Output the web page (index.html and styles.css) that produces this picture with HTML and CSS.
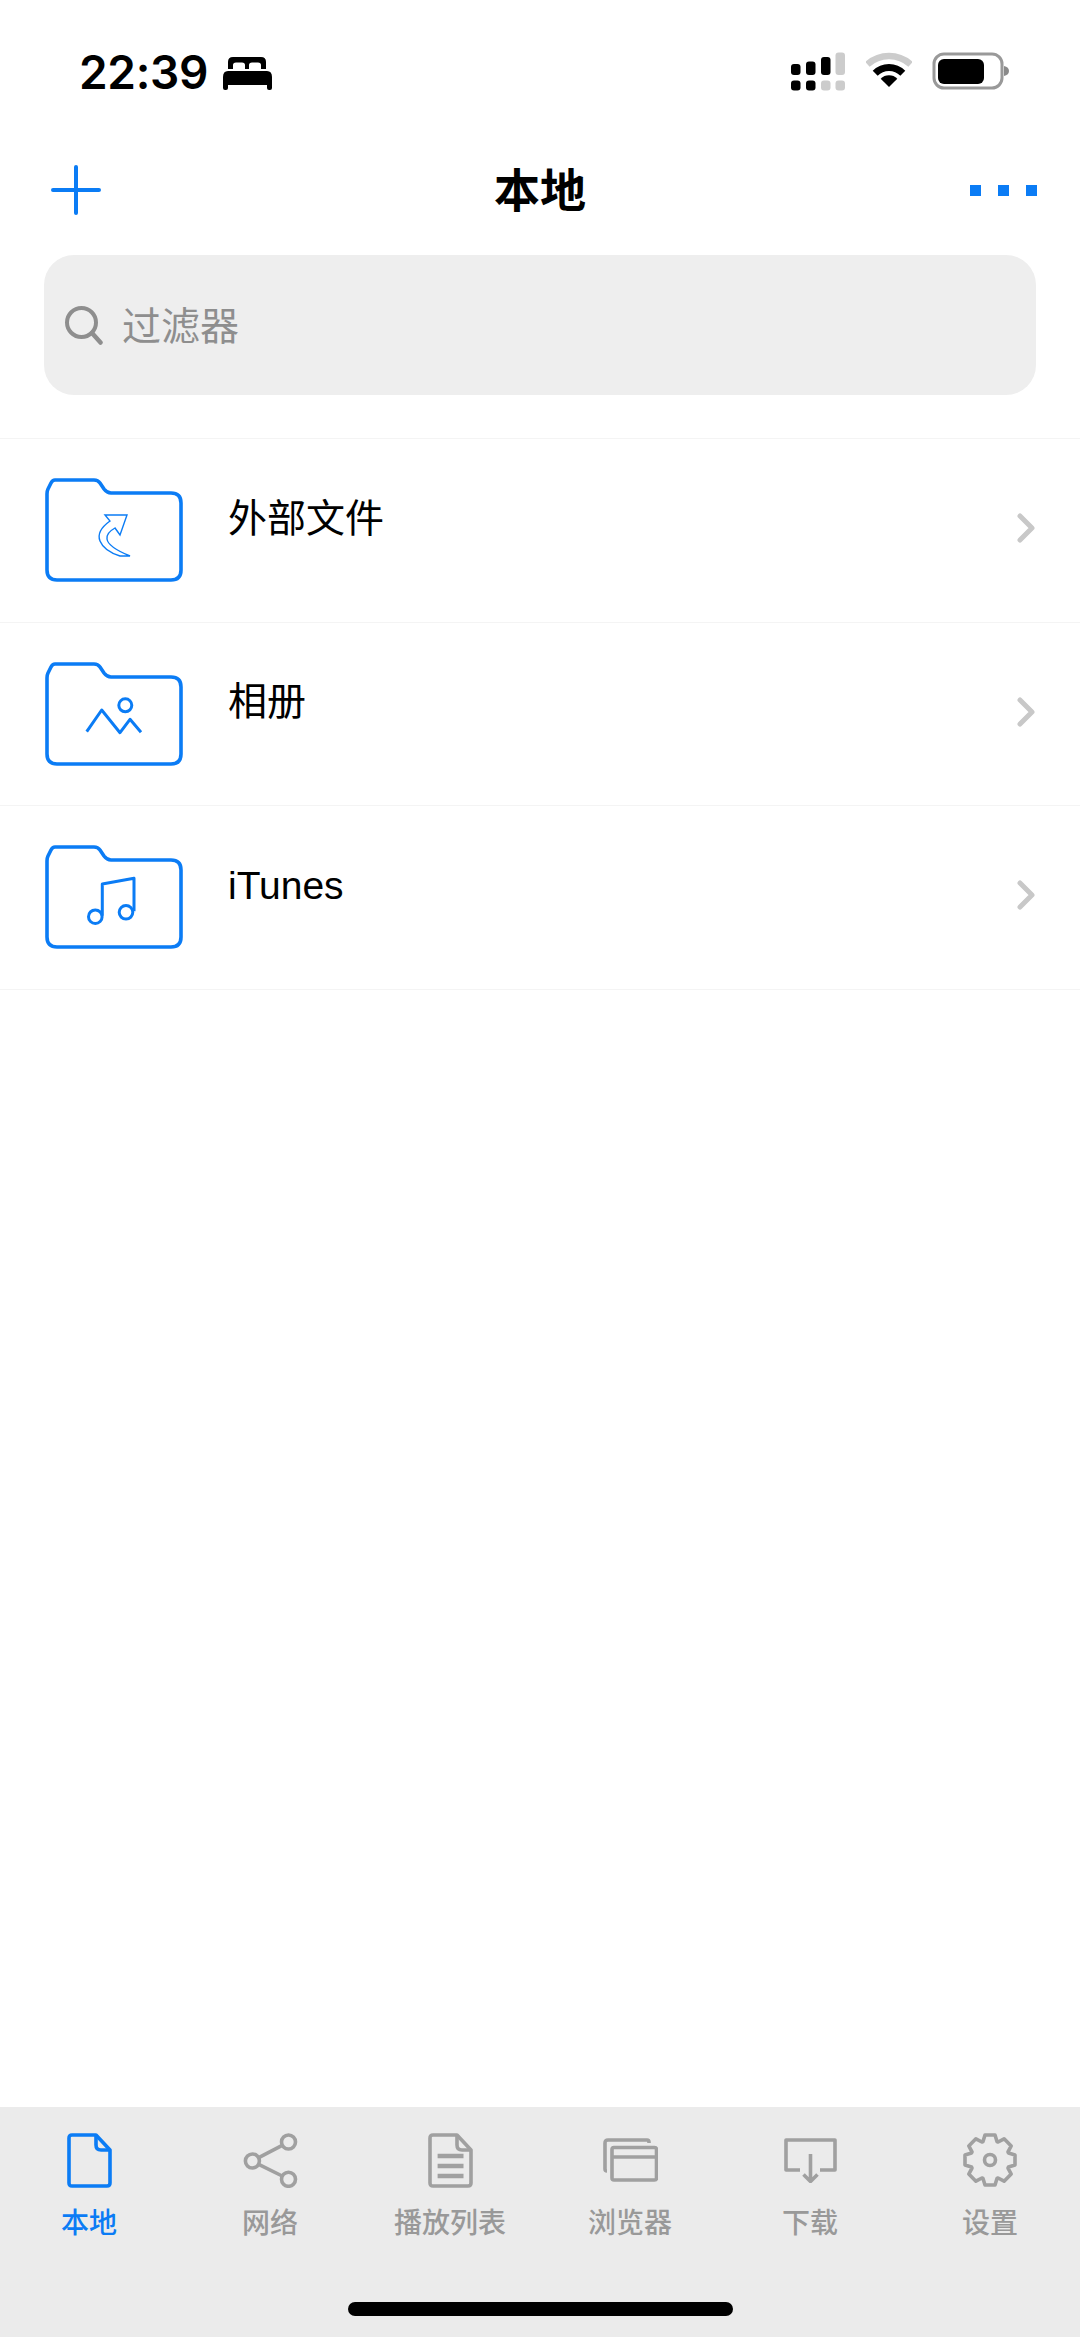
FILE: index.html
```html
<!DOCTYPE html>
<html lang="zh-CN">
<head>
  <meta charset="UTF-8">
  <title>本地</title>
  <link rel="stylesheet" href="styles.css">
</head>
<body>
  <svg class="sprites" width="0" height="0">
    <defs>
      <path id="folder" d="M11 3H50Q54 3 56 6L60 12Q63 16 67 16H127Q137 16 137 26V93Q137 103 127 103H13Q3 103 3 93V17Q3 14 4 12L7 6Q8.500 3 11 3Z"/>
    </defs>
  </svg>

  <div class="statusbar">
    <div class="status-left">
      <span class="time">22:39</span>
      <svg class="bed" viewBox="0 0 49 33" width="49" height="33">
        <path d="M5 12V5Q5 0 10 0H38Q43 0 43 5V12H38V8Q38 5.500 35 5.500H29Q26 5.500 26 8V12H22V8Q22 5.500 19 5.500H13Q10 5.500 10 8V12Z"/>
        <path d="M5 14H44Q49 14 49 20V31Q49 33 47 33H46Q44 33 44 31V28H5V31Q5 33 3 33H2Q0 33 0 31V20Q0 14 5 14Z"/>
      </svg>
    </div>
    <div class="status-right">
      <svg class="signal" viewBox="0 0 54 39" width="54" height="39">
        <rect x="0" y="12" width="9.500" height="11" rx="3"/>
        <rect x="15" y="9.500" width="9.500" height="13.500" rx="3"/>
        <rect x="30" y="5" width="9.500" height="18" rx="3"/>
        <rect x="44.500" y="0.500" width="9.500" height="22.500" rx="3" fill="#cccccc"/>
        <rect x="0" y="28.500" width="9.500" height="10" rx="3"/>
        <rect x="15" y="28.500" width="9.500" height="10" rx="3"/>
        <rect x="30" y="28.500" width="9.500" height="10" rx="3" fill="#cccccc"/>
        <rect x="44.500" y="28.500" width="9.500" height="10" rx="3" fill="#cccccc"/>
      </svg>
      <svg viewBox="0 0 46 35" width="46" height="35">
        <path d="M1.400 12.400A32 32 0 0 1 44.600 12.400" fill="none" stroke="#cccccc" stroke-width="6.500"/>
        <path d="M9.200 21.200A19.500 19.500 0 0 1 36.800 21.200" fill="none" stroke="#000" stroke-width="7"/>
        <path d="M23 35L14.700 26.700A11.700 11.700 0 0 1 31.300 26.700Z"/>
      </svg>
      <svg viewBox="0 0 77 38" width="77" height="38">
        <rect x="2" y="2" width="68" height="34" rx="10" fill="none" stroke="#999999" stroke-width="3"/>
        <rect x="6" y="7" width="46" height="25" rx="6"/>
        <path d="M72 14Q77 15 77 19Q77 23 72 24Z" fill="#8a8a8a"/>
      </svg>
    </div>
  </div>

  <div class="navbar">
    <svg class="nav-plus" viewBox="0 0 50 50" width="50" height="50">
      <path d="M25 2V48M2 25H48" fill="none" stroke="#0b7cf5" stroke-width="4" stroke-linecap="round"/>
    </svg>
    <h1 class="nav-title">本地</h1>
    <div class="nav-more">
      <span class="dot"></span>
      <span class="dot"></span>
      <span class="dot"></span>
    </div>
  </div>

  <div class="search">
    <svg viewBox="0 0 39 40" width="39" height="40">
      <circle cx="17.500" cy="17.500" r="14.500" fill="none" stroke="#8e8e8e" stroke-width="4"/>
      <path d="M28 28L36.500 37.500" fill="none" stroke="#8e8e8e" stroke-width="4.500" stroke-linecap="round"/>
    </svg>
    <span class="search-text">过滤器</span>
  </div>

  <main class="list">
    <div class="row">
      <svg class="folder" viewBox="0 0 140 106" width="140" height="106">
        <use href="#folder"/>
        <path class="thin" d="M61 38H83L76 58L71 51Q62 56 63 62Q64 70 86 79H76Q60 74 56 64Q52 54 66 44Z"/>
      </svg>
      <span class="row-name">外部文件</span>
      <svg class="chevron" viewBox="0 0 20 30" width="20" height="30">
        <path d="M3 3L15 15L3 27"/>
      </svg>
    </div>
    <div class="row">
      <svg class="folder" viewBox="0 0 140 106" width="140" height="106">
        <use href="#folder"/>
        <path class="glyph" d="M42.700 70.700L57.700 49L76 71.700L86 58.300L97 71.300"/>
        <circle class="glyph" cx="81.300" cy="44.300" r="6.500"/>
      </svg>
      <span class="row-name">相册</span>
      <svg class="chevron" viewBox="0 0 20 30" width="20" height="30">
        <path d="M3 3L15 15L3 27"/>
      </svg>
    </div>
    <div class="row">
      <svg class="folder" viewBox="0 0 140 106" width="140" height="106">
        <use href="#folder"/>
        <path class="glyph" d="M58.300 71.700V40L90 34.300V67.300"/>
        <circle class="glyph" cx="51.300" cy="72.700" r="6.800"/>
        <circle class="glyph" cx="82" cy="68.300" r="6.800"/>
      </svg>
      <span class="row-name">iTunes</span>
      <svg class="chevron" viewBox="0 0 20 30" width="20" height="30">
        <path d="M3 3L15 15L3 27"/>
      </svg>
    </div>
  </main>

  <footer class="tabbar">
    <nav class="tabs">
      <div class="tab tab-active">
        <div class="tab-icon">
          <svg viewBox="0 0 45 55" width="45" height="55">
            <path d="M5 2H29L43 17V50Q43 53 40 53H5Q2 53 2 50V5Q2 2 5 2Z"/>
            <path d="M29 2V12Q29 17 34 17H43"/>
          </svg>
        </div>
        <span>本地</span>
      </div>
      <div class="tab">
        <div class="tab-icon">
          <svg viewBox="0 0 55 55" width="55" height="55">
            <circle cx="45.500" cy="9" r="7"/>
            <circle cx="9.400" cy="28" r="7"/>
            <circle cx="45.500" cy="46.300" r="7"/>
            <path d="M15.700 24.700L39.200 12.300M15.700 31.300L39.200 43"/>
          </svg>
        </div>
        <span>网络</span>
      </div>
      <div class="tab">
        <div class="tab-icon">
          <svg viewBox="0 0 45 55" width="45" height="55">
            <path d="M5 2H29L43 17V50Q43 53 40 53H5Q2 53 2 50V5Q2 2 5 2Z"/>
            <path d="M29 2V12Q29 17 34 17H43"/>
            <path class="fat" d="M9.600 23H35.500M9.600 33H35.500M9.600 43H35.500"/>
          </svg>
        </div>
        <span>播放列表</span>
      </div>
      <div class="tab">
        <div class="tab-icon">
          <svg viewBox="0 0 55 44" width="55" height="44">
            <rect x="9" y="9.500" width="44.500" height="32.500" rx="2"/>
            <path d="M9 19H53.500"/>
            <path d="M46 5V4Q46 2 44 2H5Q2 2 2 5V31Q2 33 4 33"/>
          </svg>
        </div>
        <span>浏览器</span>
      </div>
      <div class="tab">
        <div class="tab-icon">
          <svg viewBox="0 0 53 45" width="53" height="45">
            <path d="M16 32H2V2H51V32H36"/>
            <path d="M26.500 16V43M19.500 36.500L26.500 43.500L33.500 36.500"/>
          </svg>
        </div>
        <span>下载</span>
      </div>
      <div class="tab">
        <div class="tab-icon">
          <svg viewBox="-27 -27 54 54" width="54" height="54">
            <polygon points="-7,-18.500 -5,-25 5,-25 7,-18.500 8.100,-18 14.100,-21.200 21.200,-14.100 18,-8.100 18.500,-7 25,-5 25,5 18.500,7 18,8.100 21.200,14.100 14.100,21.200 8.100,18 7,18.500 5,25 -5,25 -7,18.500 -8.100,18 -14.100,21.200 -21.200,14.100 -18,8.100 -18.500,7 -25,5 -25,-5 -18.500,-7 -18,-8.100 -21.200,-14.100 -14.100,-21.200 -8.100,-18"/>
            <circle cx="0" cy="0" r="5.500"/>
          </svg>
        </div>
        <span>设置</span>
      </div>
    </nav>
    <div class="home-indicator"></div>
  </footer>
</body>
</html>
```

FILE: styles.css
```css
* { box-sizing: border-box; }
html, body { margin: 0; padding: 0; }
body { width: 1080px; height: 2337px; display: flex; flex-direction: column; background-color: #fff; color: #000; font-family: "Liberation Sans", "Noto Sans CJK SC", sans-serif; overflow: hidden; }
svg { display: block; flex: none; }
.sprites { position: absolute; }

.statusbar { height: 130px; flex: none; display: flex; justify-content: space-between; align-items: flex-start; padding: 52px 71px 0 79px; }
.status-left { display: flex; align-items: center; gap: 15px; }
.time { font-family: Inter, sans-serif; font-size: 46px; font-weight: 600; line-height: 40px; letter-spacing: -0.300px; }
.bed { margin-top: 2px; }
.status-right { display: flex; align-items: flex-start; gap: 20px; }
.signal { margin-right: 1px; }

.navbar { height: 120px; flex: none; display: grid; grid-template-columns: 1fr auto 1fr; align-items: center; padding: 0 43px; }
.nav-plus { margin-left: 8px; }
.nav-title { margin: 2px 0 0; font-size: 46px; font-weight: 700; line-height: 60px; }
.nav-more { display: flex; justify-content: flex-end; gap: 17px; }
.dot { width: 11px; height: 11px; background-color: #0b7cf5; }

.search { height: 140px; flex: none; margin: 5px 44px 43px 44px; padding-left: 20px; display: flex; align-items: center; gap: 19px; background-color: #eeeeee; border-radius: 30px; }
.search-text { margin-bottom: 5px; font-size: 39px; color: #8e8e8e; }

.list { flex: 1; border-top: 1px solid #f4f4f4; }
.row { height: 183.500px; display: flex; align-items: center; padding: 0 43px 0 44px; border-bottom: 1px solid #f4f4f4; }
.folder { fill: none; stroke: #0b7cf5; }
.folder use { stroke-width: 3.600; }
.folder .glyph { fill: none; stroke-width: 3; stroke-linejoin: round; }
.folder .thin { fill: none; stroke-width: 1.400; }
.row-name { flex: 1; margin: 0 0 23px 44px; font-size: 39px; line-height: 48px; }
.chevron { margin-bottom: 4px; fill: none; stroke: #c8c8c8; stroke-width: 5; stroke-linecap: round; stroke-linejoin: round; }

.tabbar { height: 230px; flex: none; background-color: #ebebeb; padding-top: 25px; }
.tabs { display: grid; grid-template-columns: repeat(6, 180px); }
.tab { display: flex; flex-direction: column; align-items: center; font-size: 28px; line-height: 34px; font-weight: 500; color: #999999; }
.tab-icon { height: 56px; margin-bottom: 19px; display: flex; align-items: center; }
.tab-icon svg { fill: none; stroke: #a0a0a0; stroke-width: 3.600; stroke-linejoin: round; }
.tab-icon .fat { stroke-width: 4.500; }
.tab-active { padding-right: 2px; color: #0b7cf5; }
.tab-active .tab-icon svg { stroke: #0b7cf5; }
.home-indicator { width: 385px; height: 14px; margin: 61px auto 0; background-color: #000; border-radius: 7px; }
```
